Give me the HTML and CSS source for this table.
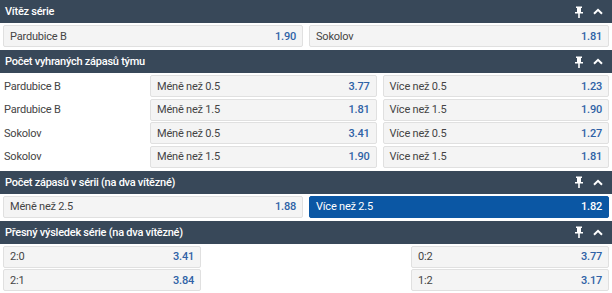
FILE: index.html
```html
<!DOCTYPE html>
<html lang="cs">
<head>
<meta charset="utf-8">
<title>Sázky</title>
<link rel="stylesheet" href="styles.css">
</head>
<body>
<div class="market">
  <div class="mhead">
    <span class="mtitle">Vítěz série</span>
    <span class="icons">
      <svg class="pin" width="8" height="12" viewBox="0 0 8 12"><path d="M1 0.5h6v1.5h-1v4h2v1.5h-3.2v4.5h-1.6v-4.5h-3.2v-1.5h2v-4h-1z" fill="#fff"/></svg>
      <svg class="chev" width="10" height="7" viewBox="0 0 10 7"><path d="M1 5.8l4-4 4 4" fill="none" stroke="#fff" stroke-width="2"/></svg>
    </span>
  </div>
  <div class="mbody">
    <div class="grid g2">
      <div class="odd"><span>Pardubice B</span><b>1.90</b></div>
      <div class="odd"><span>Sokolov</span><b>1.81</b></div>
    </div>
  </div>
</div>

<div class="market">
  <div class="mhead">
    <span class="mtitle">Počet vyhraných zápasů týmu</span>
    <span class="icons">
      <svg class="pin" width="8" height="12" viewBox="0 0 8 12"><path d="M1 0.5h6v1.5h-1v4h2v1.5h-3.2v4.5h-1.6v-4.5h-3.2v-1.5h2v-4h-1z" fill="#fff"/></svg>
      <svg class="chev" width="10" height="7" viewBox="0 0 10 7"><path d="M1 5.8l4-4 4 4" fill="none" stroke="#fff" stroke-width="2"/></svg>
    </span>
  </div>
  <div class="mbody">
    <div class="grid gl">
      <div class="lbl">Pardubice B</div>
      <div class="odd"><span>Méně než 0.5</span><b>3.77</b></div>
      <div class="odd"><span>Více než 0.5</span><b>1.23</b></div>
      <div class="lbl">Pardubice B</div>
      <div class="odd"><span>Méně než 1.5</span><b>1.81</b></div>
      <div class="odd"><span>Více než 1.5</span><b>1.90</b></div>
      <div class="lbl">Sokolov</div>
      <div class="odd"><span>Méně než 0.5</span><b>3.41</b></div>
      <div class="odd"><span>Více než 0.5</span><b>1.27</b></div>
      <div class="lbl">Sokolov</div>
      <div class="odd"><span>Méně než 1.5</span><b>1.90</b></div>
      <div class="odd"><span>Více než 1.5</span><b>1.81</b></div>
    </div>
  </div>
</div>

<div class="market">
  <div class="mhead">
    <span class="mtitle">Počet zápasů v sérii (na dva vítězné)</span>
    <span class="icons">
      <svg class="pin" width="8" height="12" viewBox="0 0 8 12"><path d="M1 0.5h6v1.5h-1v4h2v1.5h-3.2v4.5h-1.6v-4.5h-3.2v-1.5h2v-4h-1z" fill="#fff"/></svg>
      <svg class="chev" width="10" height="7" viewBox="0 0 10 7"><path d="M1 5.8l4-4 4 4" fill="none" stroke="#fff" stroke-width="2"/></svg>
    </span>
  </div>
  <div class="mbody">
    <div class="grid g2">
      <div class="odd"><span>Méně než 2.5</span><b>1.88</b></div>
      <div class="odd sel"><span>Více než 2.5</span><b>1.82</b></div>
    </div>
  </div>
</div>

<div class="market">
  <div class="mhead">
    <span class="mtitle">Přesný výsledek série (na dva vítězné)</span>
    <span class="icons">
      <svg class="pin" width="8" height="12" viewBox="0 0 8 12"><path d="M1 0.5h6v1.5h-1v4h2v1.5h-3.2v4.5h-1.6v-4.5h-3.2v-1.5h2v-4h-1z" fill="#fff"/></svg>
      <svg class="chev" width="10" height="7" viewBox="0 0 10 7"><path d="M1 5.8l4-4 4 4" fill="none" stroke="#fff" stroke-width="2"/></svg>
    </span>
  </div>
  <div class="mbody">
    <div class="grid g3">
      <div class="odd"><span>2:0</span><b>3.41</b></div>
      <div class="empty"></div>
      <div class="odd"><span>0:2</span><b>3.77</b></div>
      <div class="odd"><span>2:1</span><b>3.84</b></div>
      <div class="empty"></div>
      <div class="odd"><span>1:2</span><b>3.17</b></div>
    </div>
  </div>
</div>
</body>
</html>
```
FILE: styles.css
```css
* { box-sizing: border-box; }
html, body { margin: 0; padding: 0; background: #fff; }
body {
  font-family: Roboto, "Liberation Sans", Arial, sans-serif;
  font-size: 11px;
  letter-spacing: -0.2px;
  color: #444;
  width: 612px;
  overflow: hidden;
}
.market { display: flex; flex-direction: column; }
.mhead {
  height: 23px;
  background: #384859;
  color: #fff;
  display: flex;
  align-items: center;
  justify-content: space-between;
  padding: 0 9px 0 5px;
}
.mtitle { font-weight: 500; font-size: 11px; letter-spacing: -0.25px; }
.icons { display: flex; align-items: center; gap: 10px; }
.pin { display: block; }
.chev { display: block; }
.mbody { padding: 2px 3px 3px; }
.grid { display: grid; row-gap: 1.5px; }
.g2 { grid-template-columns: 1fr 1fr; column-gap: 6px; }
.gl { grid-template-columns: 141px 1fr 1fr; column-gap: 6px; }
.g3 { grid-template-columns: 1fr 1fr 1fr; column-gap: 6px; }
.lbl {
  height: 22px;
  display: flex;
  align-items: center;
  padding-left: 1px;
  color: #444;
}
.odd {
  height: 22px;
  background: #f4f4f4;
  border: 1px solid #e0e0e0;
  border-radius: 2px;
  display: flex;
  align-items: center;
  justify-content: space-between;
  padding: 0 6px 0 6px;
  color: #444;
}
.odd b { font-weight: 500; color: #2f62a6; }
.odd.sel { background: #0b57a4; border-color: #0b57a4; color: #fff; }
.odd.sel b { color: #fff; }
```
